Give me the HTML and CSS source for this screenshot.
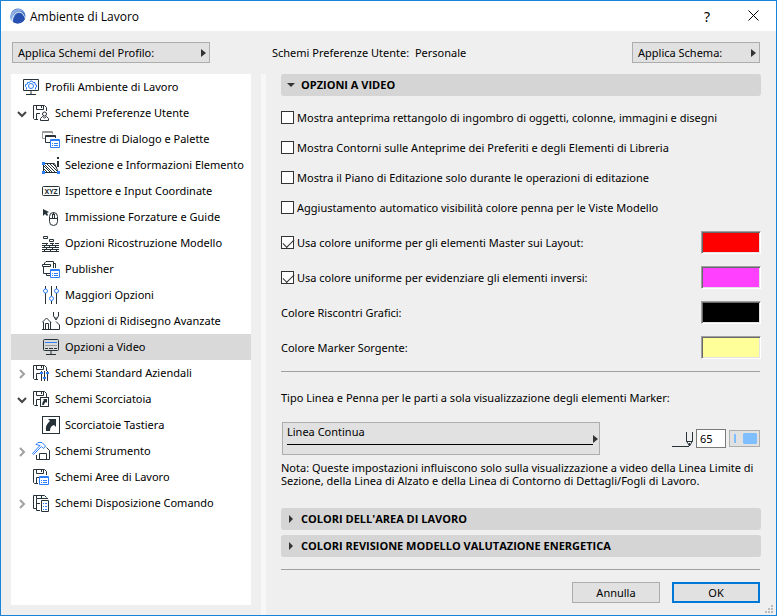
FILE: index.html
```html
<!DOCTYPE html>
<html lang="it">

<head>
    <meta charset="UTF-8">
    <meta name="viewport" content="width=device-width, initial-scale=1.0">
    <title>Ambiente di Lavoro</title>

    <link rel="stylesheet" href="styles.css">
</head>

<body>

    <!-- Shared icon parts -->
    <svg class="sprite" aria-hidden="true">
        <symbol id="floppy" viewBox="0 0 18 18">
            <path class="dark" d="M6 15.500H2.500L1.500 14.500V1.500H12.500L14.500 3.500V7M4.500 2V5.500H11.500V2M9.500 2V4M4.500 15V9.500H8" />
        </symbol>
        <symbol id="palette" viewBox="0 0 10 9">
            <path class="blue" d="M.5 .5H9.500V8.500H.5ZM.5 1.500H9.500" />
            <path class="blue" d="M2 4.500H3M4 4.500H8M2 6.500H3M4 6.500H8" />
        </symbol>
        <symbol id="open" viewBox="0 0 10 10">
            <path d="M1 3L5 7L9 3" fill="none" stroke="#444" stroke-width="2" />
        </symbol>
        <symbol id="closed" viewBox="0 0 10 10">
            <path d="M3 1L7 5L3 9" fill="none" stroke="#a0a0a0" stroke-width="2" />
        </symbol>
    </svg>

    <div class="window">

        <!-- Title bar -->
        <header class="titlebar">
            <svg class="logo" width="16" height="16" viewBox="0 0 16 16">
                <circle cx="8" cy="8" r="7.500" fill="#3f6fc4" />
                <path d="M0 9C1 4 4 1 9 1C12 1 14 3 15 6C12 2 8 2 5 5C3 7 2 10 2 13C1 12 0 11 0 9Z" fill="#8fb0e4" />
                <path d="M2 13C3 7 6 4 9 4C12 4 14 7 15 11" fill="none" stroke="#fff" />
                <path d="M3 14C4 9 7 5 9 5C12 5 14 8 15 11C13 15 7 17 3 14Z" fill="#2850b0" />
            </svg>
            <h1>Ambiente di Lavoro</h1>
            <button class="title-btn help" aria-label="Aiuto">?</button>
            <button class="title-btn" aria-label="Chiudi">
                <svg width="11" height="11" viewBox="0 0 11 11"><path d="M.5 .5L10.500 10.500M10.500 .5L.5 10.500" stroke="#000" /></svg>
            </button>
        </header>

        <!-- Scheme selectors -->
        <div class="toolbar">
            <button class="btn menu-btn profile-btn">Applica Schemi del Profilo:</button>
            <p>Schemi Preferenze Utente:&nbsp; Personale</p>
            <button class="btn menu-btn scheme-btn">Applica Schema:</button>
        </div>

        <div class="content">

            <!-- Tree -->
            <nav class="tree">
                <ul>
                    <li><a href="#" class="root">
                        <svg class="icon" viewBox="0 0 18 18"><path class="dark" d="M1.500 1.500H16.500V12.500H1.500ZM9 13V16M4 16.500H14" /><circle class="blue" cx="9" cy="8" r="2.500" /><path class="blue" d="M4.500 11.500V9.500L3.500 8.500V6.500L5.500 6V4.500L7.500 4.500L8.500 3H10L11 4.500H13V6.500L14.500 7V9L13.500 9.500V11.500" /></svg>
                        Profili Ambiente di Lavoro</a></li>
                    <li><a href="#">
                        <svg class="chevron"><use href="#open" /></svg>
                        <svg class="icon" viewBox="0 0 18 18"><use href="#floppy" /><circle class="dark" cx="12.500" cy="10" r="2" /><path class="dark" d="M8.500 16.500V14.500L10.500 12.500L12.500 14L14.500 12.500L16.500 14.500V16.500Z" /></svg>
                        Schemi Preferenze Utente</a>
                        <ul>
                            <li><a href="#">
                                <svg class="icon" viewBox="0 0 18 18"><path class="gray" d="M3 8.500H.5V1.500H10.500V4M.5 2.500H10" /><path class="dark" d="M8 12.500H3.500V5.500H13.500V8M3.500 6.500H13" /><use href="#palette" x="8" y="9" width="10" height="9" /></svg>
                                Finestre di Dialogo e Palette</a></li>
                            <li><a href="#">
                                <svg class="icon" viewBox="0 0 18 18"><path class="dark" d="M1.500 7.500H12.500L16.500 16.500H1.500Z" /><path d="M2 13L5 16M2 10L8 16M2 8L10 16M5 8L13 16M8 8L16 16M11 8L15 12" fill="none" stroke="#263238" /><path d="M0 6H3V9H0ZM0 15H3V18H0ZM15 15H18V18H15Z" fill="#2d7ff9" /><path d="M15 1H17V3H15ZM15 5H17V11H15Z" fill="#263238" /></svg>
                                Selezione e Informazioni Elemento</a></li>
                            <li><a href="#">
                                <svg class="icon" viewBox="0 0 18 18"><rect class="dark" x=".5" y="4.500" width="17" height="9" rx="1" /><text x="9" y="12" class="xyz">XYZ</text></svg>
                                Ispettore e Input Coordinate</a></li>
                            <li><a href="#">
                                <svg class="icon" viewBox="0 0 18 18"><path d="M1 1L7 4L5 5L6 7L5 8L3 6L1 8Z" fill="#263238" /><rect class="dark" x="7.500" y="4.500" width="8" height="13" rx="4" /><path class="dark" d="M7.500 10.500H16M11.500 4.500V7" /><rect class="dark" x="10.500" y="6.500" width="2" height="4" /></svg>
                                Immissione Forzature e Guide</a></li>
                            <li><a href="#">
                                <svg class="icon" viewBox="0 0 18 18"><path class="dark" d="M1.500 2.500H5.500V4.500H1.500ZM7.500 5.500H11.500V7.500H7.500ZM0 9.500H6M8 9.500H12M13 9.500H17M0 11.500H17M0 13.500H17M0 15.500H17M0 17.500H17M4.500 10V11M10.500 10V11M2.500 12V13M7.500 12V13M13.500 12V13M4.500 14V15M10.500 14V15M2.500 16V17M8.500 16V17M14.500 16V17" /></svg>
                                Opzioni Ricostruzione Modello</a></li>
                            <li><a href="#">
                                <svg class="icon" viewBox="0 0 18 18"><path class="dark" d="M2.500 4V3L4 1.500H11.500V8M.5 4.500H8.500V6.500H.5ZM1.500 7V13.500H8M11.500 3.500H13.500V8M4.500 14V15.500H8" /><use href="#palette" x="8" y="9" width="10" height="9" /></svg>
                                Publisher</a></li>
                            <li><a href="#">
                                <svg class="icon" viewBox="0 0 18 18"><path class="dark" d="M3.500 0V3M3.500 7V18M9.500 0V10M9.500 15V18M14.500 0V3M14.500 7V18" /><circle class="blue" cx="3.500" cy="5" r="2" /><circle class="blue" cx="9.500" cy="12.500" r="2" /><circle class="blue" cx="14.500" cy="5" r="2" /></svg>
                                Maggiori Opzioni</a></li>
                            <li><a href="#">
                                <svg class="icon" viewBox="0 0 18 18"><path class="dark" d="M0 10.500L4.500 6L9 10.500M1.500 10V17.500M8.500 10V17.500M0 17.500H17.500V13L14 9.500M3.500 17V11.500H6.500V17M11.500 0V4L14 8L16.500 4V0M13 6H15" /></svg>
                                Opzioni di Ridisegno Avanzate</a></li>
                            <li><a href="#" class="selected" aria-current="page">
                                <svg class="icon" viewBox="0 0 18 18"><rect class="dark" x="1.500" y="1.500" width="15" height="11" rx="1" /><path class="dark" d="M3 10.500H6M7 10.500H11M12 10.500H15M9 13V16M4 16.500H14" /><path class="blue" d="M3 4.500H15" /><path class="gray" d="M3 7.500H15" /></svg>
                                Opzioni a Video</a></li>
                        </ul>
                    </li>
                    <li><a href="#">
                        <svg class="chevron"><use href="#closed" /></svg>
                        <svg class="icon" viewBox="0 0 18 18"><use href="#floppy" /><path class="dark" d="M9.500 7V17M12.500 7V17M15.500 7V17" /><path d="M8 8H11V10H8ZM11 13H14V15H11ZM14 8H17V10H14Z" fill="#2d7ff9" /></svg>
                        Schemi Standard Aziendali</a></li>
                    <li><a href="#">
                        <svg class="chevron"><use href="#open" /></svg>
                        <svg class="icon" viewBox="0 0 18 18"><use href="#floppy" /><rect class="dark" x="8.500" y="7.500" width="8" height="9" /><path d="M11 9H15V13L14 12Q12 13 12 15H10Q10 12 12 10Z" fill="#263238" /></svg>
                        Schemi Scorciatoia</a>
                        <ul>
                            <li><a href="#">
                                <svg class="icon" viewBox="0 0 18 18"><rect class="dark" x=".5" y=".5" width="17" height="17" /><path d="M6 3H14V11L12 9Q8 10 8 15H4Q3 9 8 5Z" fill="#263238" /></svg>
                                Scorciatoie Tastiera</a></li>
                        </ul>
                    </li>
                    <li><a href="#">
                        <svg class="chevron"><use href="#closed" /></svg>
                        <svg class="icon" viewBox="0 0 18 18"><path class="dark" d="M4.500 13V17.500H17.500V8.500L14.500 5.500M7.500 17V11.500H14.500V17" /><path class="blue" d="M4 2.500L6 .5H10L13.500 4L11.500 6.500L9.500 4.500L1.500 12.500L.5 11.500L8 3.500Z" /></svg>
                        Schemi Strumento</a></li>
                    <li><a href="#" class="leaf">
                        <svg class="icon" viewBox="0 0 18 18"><use href="#floppy" /><use href="#palette" x="7" y="8" width="10" height="9" /></svg>
                        Schemi Aree di Lavoro</a></li>
                    <li><a href="#">
                        <svg class="chevron"><use href="#closed" /></svg>
                        <svg class="icon" viewBox="0 0 18 18"><path class="dark" d="M4 14.500H1.500V1.500H12.500L14.500 3.500M4.500 2V4.500H16M9.500 2V4M4.500 5V16.500H8M4.500 9.500H8M9.500 17.500V6.500H16.500V17.500Z" /><path class="blue" d="M11 9.500H12M13 9.500H15M11 12.500H12M13 12.500H15M11 15.500H12M13 15.500H15" /></svg>
                        Schemi Disposizione Comando</a></li>
                </ul>
            </nav>

            <div class="divider"></div>

            <!-- Options -->
            <main class="options">
                <button class="section open" aria-expanded="true">OPZIONI A VIDEO</button>

                <div class="checks">
                    <label><input type="checkbox"> Mostra anteprima rettangolo di ingombro di oggetti, colonne, immagini e disegni</label>
                    <label><input type="checkbox"> Mostra Contorni sulle Anteprime dei Preferiti e degli Elementi di Libreria</label>
                    <label><input type="checkbox"> Mostra il Piano di Editazione solo durante le operazioni di editazione</label>
                    <label><input type="checkbox"> Aggiustamento automatico visibilità colore penna per le Viste Modello</label>
                </div>

                <div class="colors">
                    <div class="color-row">
                        <label><input type="checkbox" checked> Usa colore uniforme per gli elementi Master sui Layout:</label>
                        <button class="swatch red" aria-label="Colore Master"></button>
                    </div>
                    <div class="color-row">
                        <label><input type="checkbox" checked> Usa colore uniforme per evidenziare gli elementi inversi:</label>
                        <button class="swatch magenta" aria-label="Colore elementi inversi"></button>
                    </div>
                    <div class="color-row">
                        <span>Colore Riscontri Grafici:</span>
                        <button class="swatch black" aria-label="Colore Riscontri Grafici"></button>
                    </div>
                    <div class="color-row">
                        <span>Colore Marker Sorgente:</span>
                        <button class="swatch yellow" aria-label="Colore Marker Sorgente"></button>
                    </div>
                </div>

                <hr>

                <label class="line-label" for="pen">Tipo Linea e Penna per le parti a sola visualizzazione degli elementi Marker:</label>
                <div class="line-row">
                    <button class="btn menu-btn line-btn"><span>Linea Continua</span></button>
                    <div class="pen">
                        <svg width="22" height="16" viewBox="0 0 22 16"><path class="dark" d="M0 15.500H17M14.500 1V10L17.500 15L20.500 10V1M14.500 10.500H20.500M17.500 12V15" /></svg>
                        <input type="text" id="pen" value="65">
                        <button class="btn pen-btn" aria-label="Penna"><svg width="24" height="12" viewBox="0 0 24 12"><path d="M1 1H3V10H1ZM11 0H23L24 1V10L23 11H11L10 10V1Z" fill="#80bfff" /></svg></button>
                    </div>
                </div>
                <p class="note">Nota: Queste impostazioni influiscono solo sulla visualizzazione a video della Linea Limite di Sezione, della Linea di Alzato e della Linea di Contorno di Dettagli/Fogli di Lavoro.</p>

                <div class="sections">
                    <button class="section" aria-expanded="false">COLORI DELL'AREA DI LAVORO</button>
                    <button class="section" aria-expanded="false">COLORI REVISIONE MODELLO VALUTAZIONE ENERGETICA</button>
                </div>

                <hr>

                <div class="actions">
                    <button class="btn">Annulla</button>
                    <button class="btn primary">OK</button>
                </div>
            </main>
        </div>

        <svg class="grip" width="8" height="8" viewBox="0 0 8 8"><path d="M6 0H8V2H6ZM3 3H5V5H3ZM6 3H8V5H6ZM0 6H2V8H0ZM3 6H5V8H3ZM6 6H8V8H6Z" fill="#bbb" /></svg>
    </div>

</body>

</html>
```

FILE: styles.css
```css
* {
    margin: 0;
    padding: 0;
    box-sizing: border-box;
}

body {
    font-family: "Noto Sans", "Open Sans", sans-serif;
    font-size: 11px;
    line-height: 13px;
    color: #000;
}

button, input {
    font: inherit;
    color: inherit;
}

ul {
    list-style: none;
}

.sprite {
    display: none;
}

.window {
    position: relative;
    min-height: 100vh;
    display: flex;
    flex-direction: column;
    border: 1px solid #1883d7;
    background-color: #efefef;
}

/* Title bar */
.titlebar {
    display: flex;
    align-items: center;
    height: 30px;
    padding-left: 9px;
    background-color: #fff;
}

.titlebar h1 {
    flex: 1;
    margin-left: 4px;
    font-family: "Open Sans", sans-serif;
    font-size: 12px;
    font-weight: normal;
}

.title-btn {
    width: 46px;
    height: 30px;
    border: none;
    background: none;
}

.help {
    font-size: 14px;
}

/* Buttons */
.btn {
    height: 21px;
    border: 1px solid #adadad;
    background-color: #e1e1e1;
}

.menu-btn {
    display: flex;
    align-items: center;
    justify-content: space-between;
    padding: 0 3px 0 5px;
    text-align: left;
}

.menu-btn::after {
    content: "";
    border: 4px solid transparent;
    border-left: 5px solid #333;
    border-right: none;
}

/* Scheme selectors */
.toolbar {
    display: flex;
    align-items: center;
    padding: 11px 16px 11px 11px;
}

.toolbar p {
    flex: 1;
    margin-left: 62px;
}

.profile-btn {
    width: 198px;
}

.scheme-btn {
    width: 128px;
}

.content {
    flex: 1;
    display: grid;
    grid-template-columns: 240px 5px 1fr;
    padding: 0 15px 0 10px;
}

/* Tree */
.tree {
    margin-bottom: 10px;
    background-color: #fff;
}

.tree a {
    display: flex;
    align-items: center;
    gap: 5px;
    height: 26px;
    padding: 0 0 2px 6px;
    color: #000;
    text-decoration: none;
    white-space: nowrap;
}

.tree .root {
    padding-left: 11px;
}

.tree .leaf {
    padding-left: 21px;
}

.tree ul ul a {
    padding-left: 31px;
}

.tree .selected {
    background-color: #d9d9d9;
}

.icon {
    width: 18px;
    height: 18px;
    flex: none;
    margin-top: 2px;
}

.chevron {
    width: 10px;
    height: 10px;
    flex: none;
    margin-top: 4px;
}

.dark, .blue, .gray {
    fill: none;
    stroke: #263238;
}

.blue {
    stroke: #2d7ff9;
}

.gray {
    stroke: #9a9a9a;
}

.xyz {
    font-size: 7px;
    font-weight: bold;
    text-anchor: middle;
    fill: #263238;
}

.divider {
    margin-left: 10px;
    margin-right: -10px;
    background-color: #f7f7f7;
}

/* Options */
.options {
    display: flex;
    flex-direction: column;
    padding-left: 25px;
}

.section {
    display: flex;
    align-items: center;
    width: 100%;
    height: 22px;
    padding: 0 0 1px 8px;
    border: none;
    border-radius: 3px;
    background-color: #d5d5d5;
    font-family: "Open Sans", sans-serif;
    font-weight: bold;
}

.section::before {
    content: "";
    margin-right: 8px;
    border: 4px solid transparent;
    border-left-color: #333;
    border-right: none;
}

.section.open {
    padding-left: 6px;
}

.section.open::before {
    margin-right: 6px;
    border: 4px solid transparent;
    border-top-color: #333;
    border-bottom: none;
}

.options label {
    display: flex;
    align-items: center;
}

input[type="checkbox"] {
    appearance: none;
    flex: none;
    width: 13px;
    height: 13px;
    margin-right: 3px;
    border: 1px solid #333;
    background-color: #fff;
}

input[type="checkbox"]:checked::before {
    content: "";
    display: block;
    width: 10px;
    height: 5px;
    margin: 2px 1px;
    border-left: 1px solid #333;
    border-bottom: 1px solid #333;
    transform: rotate(-45deg);
}

.checks {
    display: grid;
    gap: 17px;
    margin-top: 15px;
}

.colors {
    display: grid;
    gap: 13px;
    margin-top: 17px;
}

.color-row {
    display: flex;
    align-items: center;
    justify-content: space-between;
    height: 22px;
}

.swatch {
    width: 60px;
    height: 23px;
    border: 1px solid;
    border-color: #a0a0a0 #fff #fff #a0a0a0;
    box-shadow: inset 1px 1px #696969, inset -1px -1px #e3e3e3;
}

.red {
    background-color: #f00;
}

.magenta {
    background-color: #ff40ff;
}

.black {
    background-color: #000;
}

.yellow {
    background-color: #ffff99;
}

hr {
    margin-right: 1px;
    border: none;
    border-top: 1px solid #a0a0a0;
}

.colors + hr {
    margin-top: 13px;
}

.options .line-label {
    margin-top: 19px;
}

.line-row {
    display: flex;
    align-items: center;
    justify-content: space-between;
    margin: 18px 1px 6px;
}

.line-btn {
    width: 318px;
    height: 33px;
    padding: 0 1px 0 4px;
}

.line-btn span {
    flex: 1;
    align-self: flex-start;
    height: 20px;
    margin-top: 2px;
    border-bottom: 1px solid #000;
}

.pen {
    display: flex;
    align-items: center;
}

.pen input {
    width: 30px;
    height: 19px;
    margin: 0 3px 0 2px;
    padding-left: 3px;
    border: 1px solid #7a7a7a;
    background-color: #fff;
}

.pen-btn {
    width: 31px;
    height: 17px;
    display: flex;
    align-items: center;
    justify-content: center;
}

.sections {
    display: grid;
    gap: 5px;
    margin: 21px 0 12px;
}

.actions {
    display: flex;
    justify-content: flex-end;
    gap: 12px;
    margin: 12px 1px 0 0;
}

.actions .btn {
    width: 88px;
}

.actions .primary {
    border: 2px solid #0078d7;
}

.grip {
    position: absolute;
    right: 3px;
    bottom: 2px;
}
```
